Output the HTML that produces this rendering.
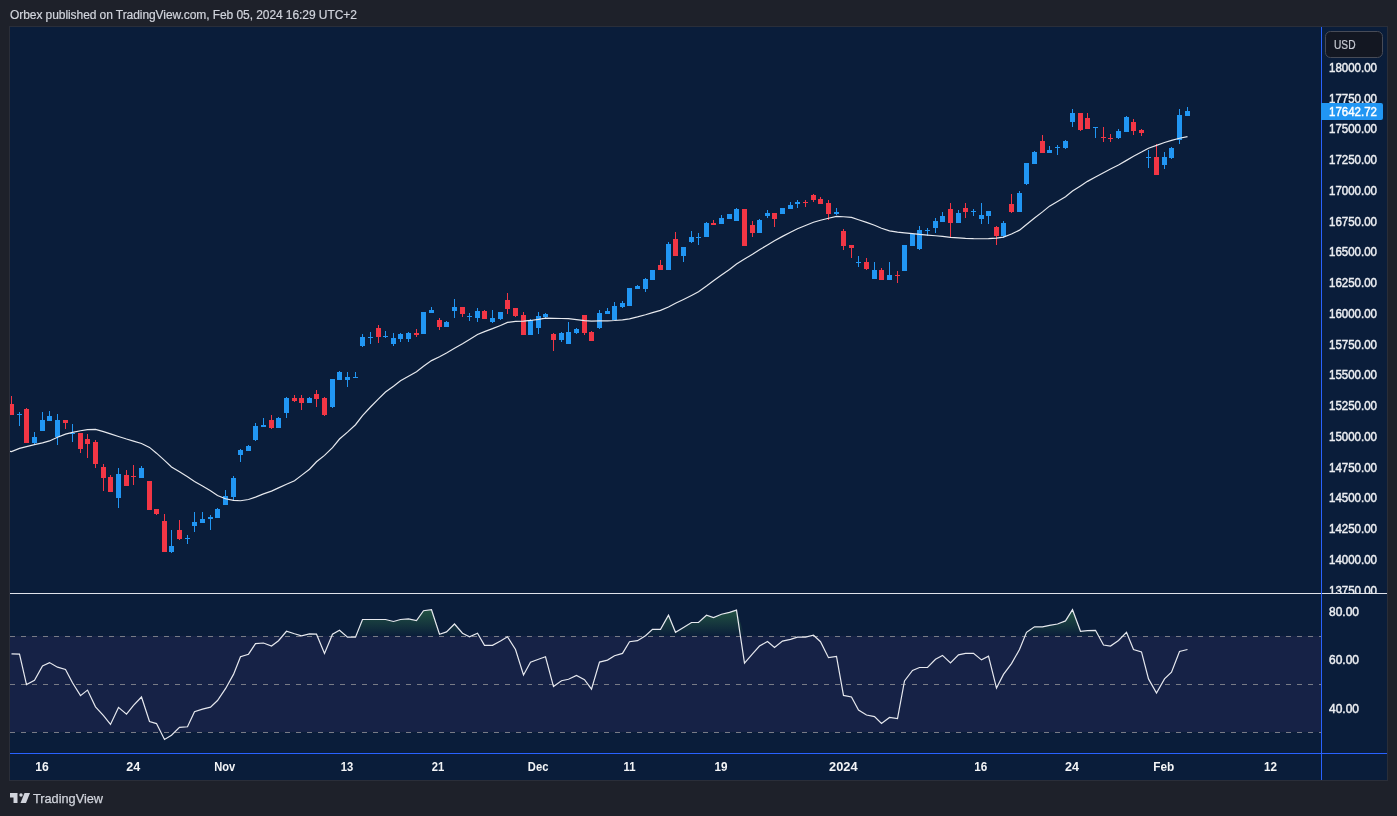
<!DOCTYPE html>
<html><head><meta charset="utf-8">
<style>
html,body{margin:0;padding:0;}
body{width:1397px;height:816px;background:#1e212a;position:relative;overflow:hidden;font-family:"Liberation Sans",sans-serif;}
svg{position:absolute;left:0;top:0;will-change:transform;}
.hdr{will-change:transform;position:absolute;left:10px;top:8px;font-size:12px;color:#d1d4dc;letter-spacing:-0.07px;-webkit-text-stroke:0.2px #d1d4dc;white-space:nowrap;line-height:15px;}
</style></head><body>
<div class="hdr">Orbex published on TradingView.com, Feb 05, 2024 16:29 UTC+2</div>
<svg width="1397" height="816" viewBox="0 0 1397 816">
<defs>
<linearGradient id="ob" gradientUnits="userSpaceOnUse" x1="0" y1="564.7" x2="0" y2="636.5">
<stop offset="0" stop-color="#4caf50" stop-opacity="1"/>
<stop offset="1" stop-color="#4caf50" stop-opacity="0"/>
</linearGradient>
<clipPath id="pane1"><rect x="10" y="27" width="1311" height="566"/></clipPath>
<clipPath id="pane2"><rect x="10" y="594" width="1311" height="159"/></clipPath>
</defs>
<rect x="9" y="26" width="1379" height="755" fill="#2a2e39" shape-rendering="crispEdges"/>
<rect x="10" y="27" width="1377" height="753" fill="#0a1d3a" shape-rendering="crispEdges"/>
<g clip-path="url(#pane1)" shape-rendering="crispEdges">
<rect x="11" y="396" width="1" height="19" fill="#f23645"/>
<rect x="9" y="404" width="5" height="11" fill="#f23645"/>
<rect x="19" y="412" width="1" height="14" fill="#2196f3"/>
<rect x="17" y="414" width="5" height="1" fill="#2196f3"/>
<rect x="26" y="408" width="1" height="35" fill="#f23645"/>
<rect x="24" y="409" width="5" height="34" fill="#f23645"/>
<rect x="34" y="432" width="1" height="12" fill="#2196f3"/>
<rect x="32" y="437" width="5" height="6" fill="#2196f3"/>
<rect x="42" y="412" width="1" height="19" fill="#2196f3"/>
<rect x="40" y="420" width="5" height="11" fill="#2196f3"/>
<rect x="49" y="411" width="1" height="10" fill="#2196f3"/>
<rect x="47" y="416" width="5" height="5" fill="#2196f3"/>
<rect x="57" y="414" width="1" height="31" fill="#2196f3"/>
<rect x="55" y="420" width="5" height="17" fill="#2196f3"/>
<rect x="65" y="420" width="1" height="9" fill="#f23645"/>
<rect x="63" y="420" width="5" height="3" fill="#f23645"/>
<rect x="72" y="424" width="1" height="18" fill="#2196f3"/>
<rect x="70" y="433" width="5" height="1" fill="#2196f3"/>
<rect x="80" y="433" width="1" height="20" fill="#f23645"/>
<rect x="78" y="433" width="5" height="16" fill="#f23645"/>
<rect x="87" y="434" width="1" height="24" fill="#f23645"/>
<rect x="85" y="439" width="5" height="5" fill="#f23645"/>
<rect x="95" y="440" width="1" height="28" fill="#f23645"/>
<rect x="93" y="442" width="5" height="22" fill="#f23645"/>
<rect x="103" y="464" width="1" height="27" fill="#f23645"/>
<rect x="101" y="467" width="5" height="11" fill="#f23645"/>
<rect x="110" y="475" width="1" height="17" fill="#f23645"/>
<rect x="108" y="477" width="5" height="15" fill="#f23645"/>
<rect x="118" y="468" width="1" height="40" fill="#2196f3"/>
<rect x="116" y="474" width="5" height="24" fill="#2196f3"/>
<rect x="126" y="470" width="1" height="16" fill="#f23645"/>
<rect x="124" y="475" width="5" height="11" fill="#f23645"/>
<rect x="133" y="465" width="1" height="20" fill="#f23645"/>
<rect x="131" y="476" width="5" height="1" fill="#f23645"/>
<rect x="141" y="466" width="1" height="12" fill="#2196f3"/>
<rect x="139" y="468" width="5" height="10" fill="#2196f3"/>
<rect x="149" y="481" width="1" height="29" fill="#f23645"/>
<rect x="147" y="481" width="5" height="29" fill="#f23645"/>
<rect x="156" y="509" width="1" height="6" fill="#f23645"/>
<rect x="154" y="509" width="5" height="5" fill="#f23645"/>
<rect x="164" y="514" width="1" height="38" fill="#f23645"/>
<rect x="162" y="521" width="5" height="31" fill="#f23645"/>
<rect x="171" y="530" width="1" height="23" fill="#2196f3"/>
<rect x="169" y="546" width="5" height="6" fill="#2196f3"/>
<rect x="179" y="520" width="1" height="20" fill="#f23645"/>
<rect x="177" y="530" width="5" height="9" fill="#f23645"/>
<rect x="187" y="535" width="1" height="9" fill="#2196f3"/>
<rect x="185" y="538" width="5" height="1" fill="#2196f3"/>
<rect x="194" y="512" width="1" height="20" fill="#2196f3"/>
<rect x="192" y="522" width="5" height="4" fill="#2196f3"/>
<rect x="202" y="512" width="1" height="11" fill="#2196f3"/>
<rect x="200" y="519" width="5" height="4" fill="#2196f3"/>
<rect x="210" y="515" width="1" height="15" fill="#2196f3"/>
<rect x="208" y="517" width="5" height="2" fill="#2196f3"/>
<rect x="217" y="508" width="1" height="10" fill="#2196f3"/>
<rect x="215" y="509" width="5" height="9" fill="#2196f3"/>
<rect x="225" y="490" width="1" height="15" fill="#2196f3"/>
<rect x="223" y="496" width="5" height="9" fill="#2196f3"/>
<rect x="233" y="476" width="1" height="25" fill="#2196f3"/>
<rect x="231" y="478" width="5" height="19" fill="#2196f3"/>
<rect x="240" y="449" width="1" height="13" fill="#2196f3"/>
<rect x="238" y="450" width="5" height="5" fill="#2196f3"/>
<rect x="248" y="445" width="1" height="6" fill="#2196f3"/>
<rect x="246" y="446" width="5" height="5" fill="#2196f3"/>
<rect x="255" y="423" width="1" height="18" fill="#2196f3"/>
<rect x="253" y="426" width="5" height="14" fill="#2196f3"/>
<rect x="263" y="418" width="1" height="9" fill="#2196f3"/>
<rect x="261" y="425" width="5" height="2" fill="#2196f3"/>
<rect x="271" y="415" width="1" height="14" fill="#f23645"/>
<rect x="269" y="420" width="5" height="8" fill="#f23645"/>
<rect x="278" y="417" width="1" height="11" fill="#2196f3"/>
<rect x="276" y="418" width="5" height="10" fill="#2196f3"/>
<rect x="286" y="397" width="1" height="21" fill="#2196f3"/>
<rect x="284" y="398" width="5" height="15" fill="#2196f3"/>
<rect x="294" y="395" width="1" height="7" fill="#f23645"/>
<rect x="292" y="398" width="5" height="3" fill="#f23645"/>
<rect x="301" y="395" width="1" height="15" fill="#f23645"/>
<rect x="299" y="398" width="5" height="5" fill="#f23645"/>
<rect x="309" y="397" width="1" height="6" fill="#2196f3"/>
<rect x="307" y="398" width="5" height="5" fill="#2196f3"/>
<rect x="316" y="390" width="1" height="17" fill="#f23645"/>
<rect x="314" y="394" width="5" height="5" fill="#f23645"/>
<rect x="324" y="397" width="1" height="19" fill="#f23645"/>
<rect x="322" y="398" width="5" height="17" fill="#f23645"/>
<rect x="332" y="379" width="1" height="29" fill="#2196f3"/>
<rect x="330" y="379" width="5" height="28" fill="#2196f3"/>
<rect x="339" y="371" width="1" height="9" fill="#2196f3"/>
<rect x="337" y="372" width="5" height="8" fill="#2196f3"/>
<rect x="347" y="372" width="1" height="15" fill="#2196f3"/>
<rect x="345" y="377" width="5" height="3" fill="#2196f3"/>
<rect x="355" y="372" width="1" height="6" fill="#2196f3"/>
<rect x="353" y="377" width="5" height="1" fill="#2196f3"/>
<rect x="362" y="334" width="1" height="13" fill="#2196f3"/>
<rect x="360" y="337" width="5" height="9" fill="#2196f3"/>
<rect x="370" y="332" width="1" height="12" fill="#2196f3"/>
<rect x="368" y="337" width="5" height="1" fill="#2196f3"/>
<rect x="378" y="325" width="1" height="18" fill="#f23645"/>
<rect x="376" y="328" width="5" height="9" fill="#f23645"/>
<rect x="385" y="331" width="1" height="7" fill="#2196f3"/>
<rect x="383" y="336" width="5" height="1" fill="#2196f3"/>
<rect x="393" y="333" width="1" height="13" fill="#2196f3"/>
<rect x="391" y="338" width="5" height="6" fill="#2196f3"/>
<rect x="400" y="333" width="1" height="9" fill="#2196f3"/>
<rect x="398" y="334" width="5" height="5" fill="#2196f3"/>
<rect x="408" y="332" width="1" height="10" fill="#2196f3"/>
<rect x="406" y="333" width="5" height="6" fill="#2196f3"/>
<rect x="416" y="329" width="1" height="8" fill="#f23645"/>
<rect x="414" y="333" width="5" height="2" fill="#f23645"/>
<rect x="423" y="312" width="1" height="22" fill="#2196f3"/>
<rect x="421" y="312" width="5" height="22" fill="#2196f3"/>
<rect x="431" y="307" width="1" height="6" fill="#2196f3"/>
<rect x="429" y="310" width="5" height="3" fill="#2196f3"/>
<rect x="439" y="318" width="1" height="12" fill="#f23645"/>
<rect x="437" y="320" width="5" height="7" fill="#f23645"/>
<rect x="446" y="321" width="1" height="6" fill="#2196f3"/>
<rect x="444" y="322" width="5" height="5" fill="#2196f3"/>
<rect x="454" y="299" width="1" height="19" fill="#2196f3"/>
<rect x="452" y="307" width="5" height="4" fill="#2196f3"/>
<rect x="462" y="307" width="1" height="10" fill="#f23645"/>
<rect x="460" y="307" width="5" height="7" fill="#f23645"/>
<rect x="469" y="313" width="1" height="8" fill="#2196f3"/>
<rect x="467" y="316" width="5" height="1" fill="#2196f3"/>
<rect x="477" y="308" width="1" height="14" fill="#2196f3"/>
<rect x="475" y="311" width="5" height="7" fill="#2196f3"/>
<rect x="484" y="310" width="1" height="9" fill="#f23645"/>
<rect x="482" y="311" width="5" height="8" fill="#f23645"/>
<rect x="492" y="310" width="1" height="13" fill="#2196f3"/>
<rect x="490" y="318" width="5" height="4" fill="#2196f3"/>
<rect x="500" y="312" width="1" height="8" fill="#2196f3"/>
<rect x="498" y="312" width="5" height="7" fill="#2196f3"/>
<rect x="507" y="293" width="1" height="21" fill="#f23645"/>
<rect x="505" y="300" width="5" height="9" fill="#f23645"/>
<rect x="515" y="308" width="1" height="9" fill="#f23645"/>
<rect x="513" y="308" width="5" height="8" fill="#f23645"/>
<rect x="523" y="312" width="1" height="23" fill="#f23645"/>
<rect x="521" y="315" width="5" height="20" fill="#f23645"/>
<rect x="530" y="319" width="1" height="16" fill="#2196f3"/>
<rect x="528" y="320" width="5" height="15" fill="#2196f3"/>
<rect x="538" y="312" width="1" height="22" fill="#2196f3"/>
<rect x="536" y="316" width="5" height="12" fill="#2196f3"/>
<rect x="545" y="313" width="1" height="6" fill="#2196f3"/>
<rect x="543" y="314" width="5" height="3" fill="#2196f3"/>
<rect x="553" y="333" width="1" height="18" fill="#f23645"/>
<rect x="551" y="334" width="5" height="6" fill="#f23645"/>
<rect x="561" y="332" width="1" height="10" fill="#2196f3"/>
<rect x="559" y="333" width="5" height="7" fill="#2196f3"/>
<rect x="568" y="322" width="1" height="22" fill="#2196f3"/>
<rect x="566" y="332" width="5" height="12" fill="#2196f3"/>
<rect x="576" y="328" width="1" height="6" fill="#2196f3"/>
<rect x="574" y="329" width="5" height="4" fill="#2196f3"/>
<rect x="584" y="315" width="1" height="20" fill="#f23645"/>
<rect x="582" y="315" width="5" height="18" fill="#f23645"/>
<rect x="591" y="331" width="1" height="10" fill="#f23645"/>
<rect x="589" y="332" width="5" height="9" fill="#f23645"/>
<rect x="599" y="310" width="1" height="19" fill="#2196f3"/>
<rect x="597" y="313" width="5" height="15" fill="#2196f3"/>
<rect x="607" y="308" width="1" height="6" fill="#2196f3"/>
<rect x="605" y="311" width="5" height="3" fill="#2196f3"/>
<rect x="614" y="302" width="1" height="18" fill="#2196f3"/>
<rect x="612" y="306" width="5" height="14" fill="#2196f3"/>
<rect x="622" y="301" width="1" height="7" fill="#2196f3"/>
<rect x="620" y="303" width="5" height="4" fill="#2196f3"/>
<rect x="629" y="288" width="1" height="18" fill="#2196f3"/>
<rect x="627" y="288" width="5" height="18" fill="#2196f3"/>
<rect x="637" y="285" width="1" height="4" fill="#2196f3"/>
<rect x="635" y="286" width="5" height="3" fill="#2196f3"/>
<rect x="645" y="278" width="1" height="14" fill="#2196f3"/>
<rect x="643" y="279" width="5" height="10" fill="#2196f3"/>
<rect x="652" y="270" width="1" height="10" fill="#2196f3"/>
<rect x="650" y="270" width="5" height="10" fill="#2196f3"/>
<rect x="660" y="260" width="1" height="10" fill="#f23645"/>
<rect x="658" y="265" width="5" height="5" fill="#f23645"/>
<rect x="668" y="242" width="1" height="28" fill="#2196f3"/>
<rect x="666" y="244" width="5" height="26" fill="#2196f3"/>
<rect x="675" y="232" width="1" height="24" fill="#f23645"/>
<rect x="673" y="239" width="5" height="17" fill="#f23645"/>
<rect x="683" y="247" width="1" height="15" fill="#2196f3"/>
<rect x="681" y="247" width="5" height="9" fill="#2196f3"/>
<rect x="691" y="231" width="1" height="12" fill="#2196f3"/>
<rect x="689" y="237" width="5" height="5" fill="#2196f3"/>
<rect x="698" y="233" width="1" height="12" fill="#2196f3"/>
<rect x="696" y="237" width="5" height="1" fill="#2196f3"/>
<rect x="706" y="222" width="1" height="15" fill="#2196f3"/>
<rect x="704" y="223" width="5" height="14" fill="#2196f3"/>
<rect x="713" y="220" width="1" height="5" fill="#f23645"/>
<rect x="711" y="223" width="5" height="2" fill="#f23645"/>
<rect x="721" y="215" width="1" height="9" fill="#2196f3"/>
<rect x="719" y="218" width="5" height="6" fill="#2196f3"/>
<rect x="729" y="214" width="1" height="5" fill="#2196f3"/>
<rect x="727" y="214" width="5" height="5" fill="#2196f3"/>
<rect x="736" y="208" width="1" height="13" fill="#2196f3"/>
<rect x="734" y="209" width="5" height="12" fill="#2196f3"/>
<rect x="744" y="209" width="1" height="37" fill="#f23645"/>
<rect x="742" y="209" width="5" height="37" fill="#f23645"/>
<rect x="752" y="221" width="1" height="16" fill="#f23645"/>
<rect x="750" y="225" width="5" height="8" fill="#f23645"/>
<rect x="759" y="219" width="1" height="14" fill="#2196f3"/>
<rect x="757" y="220" width="5" height="13" fill="#2196f3"/>
<rect x="767" y="210" width="1" height="8" fill="#2196f3"/>
<rect x="765" y="213" width="5" height="3" fill="#2196f3"/>
<rect x="774" y="213" width="1" height="14" fill="#f23645"/>
<rect x="772" y="213" width="5" height="6" fill="#f23645"/>
<rect x="782" y="208" width="1" height="6" fill="#2196f3"/>
<rect x="780" y="208" width="5" height="6" fill="#2196f3"/>
<rect x="790" y="202" width="1" height="7" fill="#2196f3"/>
<rect x="788" y="205" width="5" height="4" fill="#2196f3"/>
<rect x="797" y="200" width="1" height="8" fill="#2196f3"/>
<rect x="795" y="202" width="5" height="2" fill="#2196f3"/>
<rect x="805" y="200" width="1" height="7" fill="#f23645"/>
<rect x="803" y="202" width="5" height="1" fill="#f23645"/>
<rect x="813" y="194" width="1" height="8" fill="#f23645"/>
<rect x="811" y="195" width="5" height="5" fill="#f23645"/>
<rect x="820" y="197" width="1" height="7" fill="#f23645"/>
<rect x="818" y="199" width="5" height="5" fill="#f23645"/>
<rect x="828" y="200" width="1" height="20" fill="#f23645"/>
<rect x="826" y="203" width="5" height="11" fill="#f23645"/>
<rect x="836" y="208" width="1" height="7" fill="#2196f3"/>
<rect x="834" y="212" width="5" height="2" fill="#2196f3"/>
<rect x="843" y="229" width="1" height="21" fill="#f23645"/>
<rect x="841" y="231" width="5" height="15" fill="#f23645"/>
<rect x="851" y="245" width="1" height="13" fill="#f23645"/>
<rect x="849" y="245" width="5" height="3" fill="#f23645"/>
<rect x="858" y="256" width="1" height="11" fill="#2196f3"/>
<rect x="856" y="262" width="5" height="1" fill="#2196f3"/>
<rect x="866" y="258" width="1" height="12" fill="#f23645"/>
<rect x="864" y="262" width="5" height="7" fill="#f23645"/>
<rect x="874" y="262" width="1" height="17" fill="#2196f3"/>
<rect x="872" y="270" width="5" height="9" fill="#2196f3"/>
<rect x="881" y="268" width="1" height="12" fill="#f23645"/>
<rect x="879" y="270" width="5" height="10" fill="#f23645"/>
<rect x="889" y="262" width="1" height="18" fill="#2196f3"/>
<rect x="887" y="275" width="5" height="5" fill="#2196f3"/>
<rect x="897" y="271" width="1" height="12" fill="#f23645"/>
<rect x="895" y="275" width="5" height="1" fill="#f23645"/>
<rect x="904" y="245" width="1" height="26" fill="#2196f3"/>
<rect x="902" y="245" width="5" height="26" fill="#2196f3"/>
<rect x="912" y="234" width="1" height="12" fill="#2196f3"/>
<rect x="910" y="234" width="5" height="12" fill="#2196f3"/>
<rect x="919" y="226" width="1" height="24" fill="#2196f3"/>
<rect x="917" y="230" width="5" height="19" fill="#2196f3"/>
<rect x="927" y="228" width="1" height="8" fill="#2196f3"/>
<rect x="925" y="230" width="5" height="1" fill="#2196f3"/>
<rect x="935" y="218" width="1" height="15" fill="#2196f3"/>
<rect x="933" y="221" width="5" height="7" fill="#2196f3"/>
<rect x="942" y="212" width="1" height="10" fill="#2196f3"/>
<rect x="940" y="216" width="5" height="6" fill="#2196f3"/>
<rect x="950" y="203" width="1" height="34" fill="#f23645"/>
<rect x="948" y="209" width="5" height="14" fill="#f23645"/>
<rect x="958" y="210" width="1" height="13" fill="#2196f3"/>
<rect x="956" y="213" width="5" height="10" fill="#2196f3"/>
<rect x="965" y="203" width="1" height="15" fill="#f23645"/>
<rect x="963" y="208" width="5" height="4" fill="#f23645"/>
<rect x="973" y="209" width="1" height="7" fill="#2196f3"/>
<rect x="971" y="211" width="5" height="1" fill="#2196f3"/>
<rect x="981" y="203" width="1" height="21" fill="#2196f3"/>
<rect x="979" y="215" width="5" height="4" fill="#2196f3"/>
<rect x="988" y="211" width="1" height="13" fill="#2196f3"/>
<rect x="986" y="211" width="5" height="5" fill="#2196f3"/>
<rect x="996" y="226" width="1" height="19" fill="#f23645"/>
<rect x="994" y="227" width="5" height="9" fill="#f23645"/>
<rect x="1003" y="221" width="1" height="17" fill="#2196f3"/>
<rect x="1001" y="223" width="5" height="13" fill="#2196f3"/>
<rect x="1011" y="194" width="1" height="19" fill="#f23645"/>
<rect x="1009" y="204" width="5" height="8" fill="#f23645"/>
<rect x="1019" y="191" width="1" height="21" fill="#2196f3"/>
<rect x="1017" y="193" width="5" height="19" fill="#2196f3"/>
<rect x="1026" y="163" width="1" height="22" fill="#2196f3"/>
<rect x="1024" y="163" width="5" height="21" fill="#2196f3"/>
<rect x="1034" y="151" width="1" height="13" fill="#2196f3"/>
<rect x="1032" y="152" width="5" height="12" fill="#2196f3"/>
<rect x="1042" y="135" width="1" height="18" fill="#f23645"/>
<rect x="1040" y="141" width="5" height="12" fill="#f23645"/>
<rect x="1049" y="146" width="1" height="7" fill="#2196f3"/>
<rect x="1047" y="150" width="5" height="3" fill="#2196f3"/>
<rect x="1057" y="145" width="1" height="10" fill="#2196f3"/>
<rect x="1055" y="147" width="5" height="1" fill="#2196f3"/>
<rect x="1065" y="140" width="1" height="9" fill="#2196f3"/>
<rect x="1063" y="141" width="5" height="7" fill="#2196f3"/>
<rect x="1072" y="109" width="1" height="18" fill="#2196f3"/>
<rect x="1070" y="113" width="5" height="9" fill="#2196f3"/>
<rect x="1080" y="113" width="1" height="18" fill="#f23645"/>
<rect x="1078" y="113" width="5" height="17" fill="#f23645"/>
<rect x="1087" y="113" width="1" height="16" fill="#f23645"/>
<rect x="1085" y="118" width="5" height="11" fill="#f23645"/>
<rect x="1095" y="127" width="1" height="11" fill="#2196f3"/>
<rect x="1093" y="127" width="5" height="1" fill="#2196f3"/>
<rect x="1103" y="127" width="1" height="15" fill="#f23645"/>
<rect x="1101" y="137" width="5" height="1" fill="#f23645"/>
<rect x="1110" y="134" width="1" height="8" fill="#f23645"/>
<rect x="1108" y="138" width="5" height="1" fill="#f23645"/>
<rect x="1118" y="129" width="1" height="10" fill="#2196f3"/>
<rect x="1116" y="131" width="5" height="7" fill="#2196f3"/>
<rect x="1126" y="116" width="1" height="16" fill="#2196f3"/>
<rect x="1124" y="117" width="5" height="15" fill="#2196f3"/>
<rect x="1133" y="119" width="1" height="16" fill="#f23645"/>
<rect x="1131" y="122" width="5" height="9" fill="#f23645"/>
<rect x="1141" y="129" width="1" height="7" fill="#f23645"/>
<rect x="1139" y="130" width="5" height="3" fill="#f23645"/>
<rect x="1148" y="150" width="1" height="18" fill="#2196f3"/>
<rect x="1146" y="157" width="5" height="1" fill="#2196f3"/>
<rect x="1156" y="144" width="1" height="31" fill="#f23645"/>
<rect x="1154" y="157" width="5" height="18" fill="#f23645"/>
<rect x="1164" y="152" width="1" height="17" fill="#2196f3"/>
<rect x="1162" y="157" width="5" height="8" fill="#2196f3"/>
<rect x="1171" y="147" width="1" height="12" fill="#2196f3"/>
<rect x="1169" y="148" width="5" height="10" fill="#2196f3"/>
<rect x="1179" y="109" width="1" height="35" fill="#2196f3"/>
<rect x="1177" y="115" width="5" height="25" fill="#2196f3"/>
<rect x="1187" y="107" width="1" height="9" fill="#2196f3"/>
<rect x="1185" y="111" width="5" height="5" fill="#2196f3"/>
</g>
<g clip-path="url(#pane1)">
<path d="M10.00,451.43 L11.50,451.63 L19.50,448.38 L26.50,446.67 L34.50,444.64 L42.50,442.91 L49.50,440.94 L57.50,437.30 L65.50,434.12 L72.50,432.32 L80.50,430.72 L87.50,429.63 L95.50,429.47 L103.50,431.56 L110.50,433.90 L118.50,436.45 L126.50,439.01 L133.50,441.06 L141.50,443.44 L149.50,447.40 L156.50,453.17 L164.50,460.38 L171.50,466.93 L179.50,471.83 L187.50,476.74 L194.50,481.53 L202.50,486.05 L210.50,490.77 L217.50,495.52 L225.50,498.77 L233.50,500.38 L240.50,500.75 L248.50,499.52 L255.50,497.11 L263.50,493.85 L271.50,491.09 L278.50,487.87 L286.50,484.18 L294.50,480.68 L301.50,475.36 L309.50,469.28 L316.50,461.78 L324.50,455.38 L332.50,447.65 L339.50,439.02 L347.50,432.10 L355.50,424.74 L362.50,415.62 L370.50,406.97 L378.50,398.93 L385.50,391.98 L393.50,386.20 L400.50,380.85 L408.50,376.30 L416.50,371.77 L423.50,366.22 L431.50,360.59 L439.50,356.69 L446.50,352.91 L454.50,348.30 L462.50,343.80 L469.50,339.59 L477.50,334.55 L484.50,331.61 L492.50,328.65 L500.50,325.45 L507.50,322.37 L515.50,321.42 L523.50,321.11 L530.50,320.47 L538.50,319.33 L545.50,318.17 L553.50,318.40 L561.50,318.49 L568.50,318.58 L576.50,319.54 L584.50,320.57 L591.50,321.09 L599.50,320.78 L607.50,320.79 L614.50,320.51 L622.50,319.81 L629.50,318.90 L637.50,316.94 L645.50,314.78 L652.50,312.64 L660.50,310.42 L668.50,306.96 L675.50,303.24 L683.50,299.42 L691.50,295.45 L698.50,291.79 L706.50,286.03 L713.50,280.74 L721.50,274.99 L729.50,269.46 L736.50,264.02 L744.50,258.97 L752.50,254.32 L759.50,249.82 L767.50,244.97 L774.50,240.75 L782.50,236.36 L790.50,232.29 L797.50,228.80 L805.50,225.44 L813.50,222.28 L820.50,220.29 L828.50,218.25 L836.50,216.37 L843.50,216.76 L851.50,217.40 L858.50,219.72 L866.50,222.36 L874.50,225.27 L881.50,228.22 L889.50,230.86 L897.50,232.10 L904.50,232.81 L912.50,233.57 L919.50,234.36 L927.50,235.03 L935.50,235.74 L942.50,236.37 L950.50,237.29 L958.50,237.82 L965.50,238.30 L973.50,238.62 L981.50,238.75 L988.50,238.67 L996.50,238.13 L1003.50,237.09 L1011.50,234.07 L1019.50,230.14 L1026.50,224.49 L1034.50,217.95 L1042.50,211.90 L1049.50,206.16 L1057.50,201.47 L1065.50,196.81 L1072.50,191.08 L1080.50,185.93 L1087.50,181.35 L1095.50,176.94 L1103.50,172.66 L1110.50,169.04 L1118.50,165.00 L1126.50,160.36 L1133.50,156.24 L1141.50,152.08 L1148.50,148.18 L1156.50,145.43 L1164.50,142.52 L1171.50,140.40 L1179.50,138.27 L1187.50,136.56" fill="none" stroke="#e6e8ed" stroke-width="1.2"/>
</g>
<g clip-path="url(#pane2)">
<rect x="10" y="636" width="1311" height="96" fill="#162246" shape-rendering="crispEdges"/>
<path d="M11.5,636.5 L11.5,636.5 L19.5,636.5 L26.5,636.5 L34.5,636.5 L42.5,636.5 L49.5,636.5 L57.5,636.5 L65.5,636.5 L72.5,636.5 L80.5,636.5 L87.5,636.5 L95.5,636.5 L103.5,636.5 L110.5,636.5 L118.5,636.5 L126.5,636.5 L133.5,636.5 L141.5,636.5 L149.5,636.5 L156.5,636.5 L164.5,636.5 L171.5,636.5 L179.5,636.5 L187.5,636.5 L194.5,636.5 L202.5,636.5 L210.5,636.5 L217.5,636.5 L225.5,636.5 L233.5,636.5 L240.5,636.5 L248.5,636.5 L255.5,636.5 L263.5,636.5 L271.5,636.5 L278.5,636.5 L286.5,631.3 L294.5,633.8 L301.5,635.8 L309.5,633.8 L316.5,634.2 L324.5,636.5 L332.5,634.2 L339.5,630.3 L347.5,636.5 L355.5,636.5 L362.5,619.5 L370.5,619.5 L378.5,619.5 L385.5,619.5 L393.5,621.5 L400.5,619.5 L408.5,618.9 L416.5,620.5 L423.5,610.7 L431.5,609.7 L439.5,634.2 L446.5,631.9 L454.5,624.0 L462.5,633.2 L469.5,636.5 L477.5,633.2 L484.5,636.5 L492.5,636.5 L500.5,636.5 L507.5,636.5 L515.5,636.5 L523.5,636.5 L530.5,636.5 L538.5,636.5 L545.5,636.5 L553.5,636.5 L561.5,636.5 L568.5,636.5 L576.5,636.5 L584.5,636.5 L591.5,636.5 L599.5,636.5 L607.5,636.5 L614.5,636.5 L622.5,636.5 L629.5,636.5 L637.5,636.5 L645.5,635.8 L652.5,629.3 L660.5,629.3 L668.5,615.2 L675.5,632.3 L683.5,627.4 L691.5,622.5 L698.5,622.5 L706.5,615.2 L713.5,617.5 L721.5,614.2 L729.5,612.3 L736.5,610.1 L744.5,636.5 L752.5,636.5 L759.5,636.5 L767.5,636.5 L774.5,636.5 L782.5,636.5 L790.5,636.5 L797.5,636.5 L805.5,636.5 L813.5,635.2 L820.5,636.5 L828.5,636.5 L836.5,636.5 L843.5,636.5 L851.5,636.5 L858.5,636.5 L866.5,636.5 L874.5,636.5 L881.5,636.5 L889.5,636.5 L897.5,636.5 L904.5,636.5 L912.5,636.5 L919.5,636.5 L927.5,636.5 L935.5,636.5 L942.5,636.5 L950.5,636.5 L958.5,636.5 L965.5,636.5 L973.5,636.5 L981.5,636.5 L988.5,636.5 L996.5,636.5 L1003.5,636.5 L1011.5,636.5 L1019.5,636.5 L1026.5,632.3 L1034.5,626.8 L1042.5,626.8 L1049.5,625.4 L1057.5,624.0 L1065.5,620.9 L1072.5,609.7 L1080.5,631.3 L1087.5,630.7 L1095.5,630.3 L1103.5,636.5 L1110.5,636.5 L1118.5,636.5 L1126.5,632.3 L1133.5,636.5 L1141.5,636.5 L1148.5,636.5 L1156.5,636.5 L1164.5,636.5 L1171.5,636.5 L1179.5,636.5 L1187.5,636.5 L1187.5,636.5 Z" fill="url(#ob)" stroke="none"/>
<g stroke="#787b86" stroke-width="1" stroke-dasharray="5 6" shape-rendering="crispEdges">
<line x1="10" y1="636.5" x2="1321" y2="636.5"/>
<line x1="10" y1="684.5" x2="1321" y2="684.5"/>
<line x1="10" y1="732.5" x2="1321" y2="732.5"/>
</g>
<path d="M11.5,653.8 L19.5,654.2 L26.5,684.6 L34.5,680.3 L42.5,666.0 L49.5,662.6 L57.5,667.2 L65.5,669.5 L72.5,682.8 L80.5,695.6 L87.5,690.1 L95.5,706.8 L103.5,715.6 L110.5,724.4 L118.5,707.4 L126.5,714.2 L133.5,705.4 L141.5,697.0 L149.5,721.5 L156.5,723.6 L164.5,739.5 L171.5,735.2 L179.5,727.4 L187.5,726.8 L194.5,711.7 L202.5,709.1 L210.5,707.2 L217.5,700.5 L225.5,688.7 L233.5,674.4 L240.5,656.8 L248.5,654.2 L255.5,643.6 L263.5,643.0 L271.5,646.0 L278.5,640.7 L286.5,631.3 L294.5,633.8 L301.5,635.8 L309.5,633.8 L316.5,634.2 L324.5,653.4 L332.5,634.2 L339.5,630.3 L347.5,637.2 L355.5,637.2 L362.5,619.5 L370.5,619.5 L378.5,619.5 L385.5,619.5 L393.5,621.5 L400.5,619.5 L408.5,618.9 L416.5,620.5 L423.5,610.7 L431.5,609.7 L439.5,634.2 L446.5,631.9 L454.5,624.0 L462.5,633.2 L469.5,636.8 L477.5,633.2 L484.5,645.4 L492.5,645.4 L500.5,641.1 L507.5,636.8 L515.5,649.5 L523.5,675.0 L530.5,662.3 L538.5,659.3 L545.5,656.8 L553.5,686.6 L561.5,680.7 L568.5,679.3 L576.5,675.4 L584.5,679.7 L591.5,689.1 L599.5,662.1 L607.5,660.1 L614.5,655.8 L622.5,653.4 L629.5,641.7 L637.5,640.7 L645.5,635.8 L652.5,629.3 L660.5,629.3 L668.5,615.2 L675.5,632.3 L683.5,627.4 L691.5,622.5 L698.5,622.5 L706.5,615.2 L713.5,617.5 L721.5,614.2 L729.5,612.3 L736.5,610.1 L744.5,663.2 L752.5,653.8 L759.5,646.0 L767.5,641.5 L774.5,647.4 L782.5,641.1 L790.5,639.3 L797.5,637.2 L805.5,637.2 L813.5,635.2 L820.5,641.7 L828.5,657.7 L836.5,656.4 L843.5,695.4 L851.5,697.0 L858.5,710.1 L866.5,715.0 L874.5,716.6 L881.5,723.4 L889.5,717.5 L897.5,718.5 L904.5,680.9 L912.5,670.5 L919.5,667.5 L927.5,667.5 L935.5,659.3 L942.5,655.4 L950.5,663.0 L958.5,654.8 L965.5,653.4 L973.5,653.4 L981.5,659.9 L988.5,656.2 L996.5,688.1 L1003.5,674.4 L1011.5,663.6 L1019.5,649.5 L1026.5,632.3 L1034.5,626.8 L1042.5,626.8 L1049.5,625.4 L1057.5,624.0 L1065.5,620.9 L1072.5,609.7 L1080.5,631.3 L1087.5,630.7 L1095.5,630.3 L1103.5,645.0 L1110.5,646.0 L1118.5,640.5 L1126.5,632.3 L1133.5,649.5 L1141.5,651.9 L1148.5,678.9 L1156.5,693.0 L1164.5,678.9 L1171.5,672.1 L1179.5,651.5 L1187.5,649.5" fill="none" stroke="#e6e8ee" stroke-width="1.2" stroke-linejoin="miter"/>
</g>
<g shape-rendering="crispEdges">
<rect x="10" y="593" width="1377" height="1" fill="#e0e3eb"/>
<rect x="10" y="753" width="1377" height="1" fill="#2962ff"/>
<rect x="1321" y="27" width="1" height="753" fill="#2962ff"/>
</g>
<rect x="1325.5" y="31.5" width="57" height="26" rx="5" fill="#131722" stroke="#474b57" stroke-width="1"/>
<text x="1334" y="49" font-family="Liberation Sans" font-size="12" fill="#c8cbd3" stroke="#c8cbd3" stroke-width="0.2" textLength="21.5" lengthAdjust="spacingAndGlyphs">USD</text>
<clipPath id="axclip"><rect x="1322" y="27" width="70" height="566"/></clipPath>
<g clip-path="url(#axclip)" font-family="Liberation Sans" font-size="12.2" fill="#eceef2" stroke="#eceef2" stroke-width="0.45">
<text x="1329" y="72" textLength="48" lengthAdjust="spacingAndGlyphs">18000.00</text>
<text x="1329" y="103" textLength="48" lengthAdjust="spacingAndGlyphs">17750.00</text>
<text x="1329" y="133" textLength="48" lengthAdjust="spacingAndGlyphs">17500.00</text>
<text x="1329" y="164" textLength="48" lengthAdjust="spacingAndGlyphs">17250.00</text>
<text x="1329" y="195" textLength="48" lengthAdjust="spacingAndGlyphs">17000.00</text>
<text x="1329" y="226" textLength="48" lengthAdjust="spacingAndGlyphs">16750.00</text>
<text x="1329" y="256" textLength="48" lengthAdjust="spacingAndGlyphs">16500.00</text>
<text x="1329" y="287" textLength="48" lengthAdjust="spacingAndGlyphs">16250.00</text>
<text x="1329" y="318" textLength="48" lengthAdjust="spacingAndGlyphs">16000.00</text>
<text x="1329" y="349" textLength="48" lengthAdjust="spacingAndGlyphs">15750.00</text>
<text x="1329" y="379" textLength="48" lengthAdjust="spacingAndGlyphs">15500.00</text>
<text x="1329" y="410" textLength="48" lengthAdjust="spacingAndGlyphs">15250.00</text>
<text x="1329" y="441" textLength="48" lengthAdjust="spacingAndGlyphs">15000.00</text>
<text x="1329" y="472" textLength="48" lengthAdjust="spacingAndGlyphs">14750.00</text>
<text x="1329" y="502" textLength="48" lengthAdjust="spacingAndGlyphs">14500.00</text>
<text x="1329" y="533" textLength="48" lengthAdjust="spacingAndGlyphs">14250.00</text>
<text x="1329" y="564" textLength="48" lengthAdjust="spacingAndGlyphs">14000.00</text>
<text x="1329" y="595" textLength="48" lengthAdjust="spacingAndGlyphs">13750.00</text>
</g>
<path d="M1321,103 H1381 Q1383,103 1383,105 V118 Q1383,120 1381,120 H1321 Z" fill="#2196f3"/>
<text x="1329" y="116.3" font-family="Liberation Sans" font-size="12.5" fill="#ffffff" stroke="#ffffff" stroke-width="0.45" textLength="48" lengthAdjust="spacingAndGlyphs">17642.72</text>
<g font-family="Liberation Sans" font-size="12.5" fill="#eceef2" stroke="#eceef2" stroke-width="0.45">
<text x="1329" y="615.9" textLength="30" lengthAdjust="spacingAndGlyphs">80.00</text>
<text x="1329" y="664.1" textLength="30" lengthAdjust="spacingAndGlyphs">60.00</text>
<text x="1329" y="712.6" textLength="30" lengthAdjust="spacingAndGlyphs">40.00</text>
</g>
<g font-family="Liberation Sans" font-size="12" font-weight="bold" fill="#f4f5f7" text-anchor="middle">
<text x="41.9" y="771" textLength="13.5" lengthAdjust="spacingAndGlyphs">16</text>
<text x="133.3" y="771" textLength="14" lengthAdjust="spacingAndGlyphs">24</text>
<text x="224.8" y="771" textLength="21" lengthAdjust="spacingAndGlyphs">Nov</text>
<text x="347" y="771" textLength="12.5" lengthAdjust="spacingAndGlyphs">13</text>
<text x="438.1" y="771" textLength="12.5" lengthAdjust="spacingAndGlyphs">21</text>
<text x="538.1" y="771" textLength="20.5" lengthAdjust="spacingAndGlyphs">Dec</text>
<text x="629.5" y="771" textLength="12" lengthAdjust="spacingAndGlyphs">11</text>
<text x="721" y="771" textLength="13" lengthAdjust="spacingAndGlyphs">19</text>
<text x="843.3" y="771" textLength="28.5" lengthAdjust="spacingAndGlyphs">2024</text>
<text x="980.8" y="771" textLength="13" lengthAdjust="spacingAndGlyphs">16</text>
<text x="1072" y="771" textLength="14" lengthAdjust="spacingAndGlyphs">24</text>
<text x="1163.8" y="771" textLength="21" lengthAdjust="spacingAndGlyphs">Feb</text>
<text x="1270.6" y="771" textLength="13" lengthAdjust="spacingAndGlyphs">12</text>
</g>
<g fill="#d1d4dc">
<path d="M10,793 H17.5 V803 H13.5 V797.5 H10 Z"/>
<circle cx="21" cy="795" r="1.7"/>
<path d="M24.5,793 H30 L26,803 H20.5 Z"/>
</g>
<text x="33" y="803" font-family="Liberation Sans" font-size="13" fill="#d1d4dc" stroke="#d1d4dc" stroke-width="0.25" textLength="70" lengthAdjust="spacingAndGlyphs">TradingView</text>
</svg>
</body></html>
